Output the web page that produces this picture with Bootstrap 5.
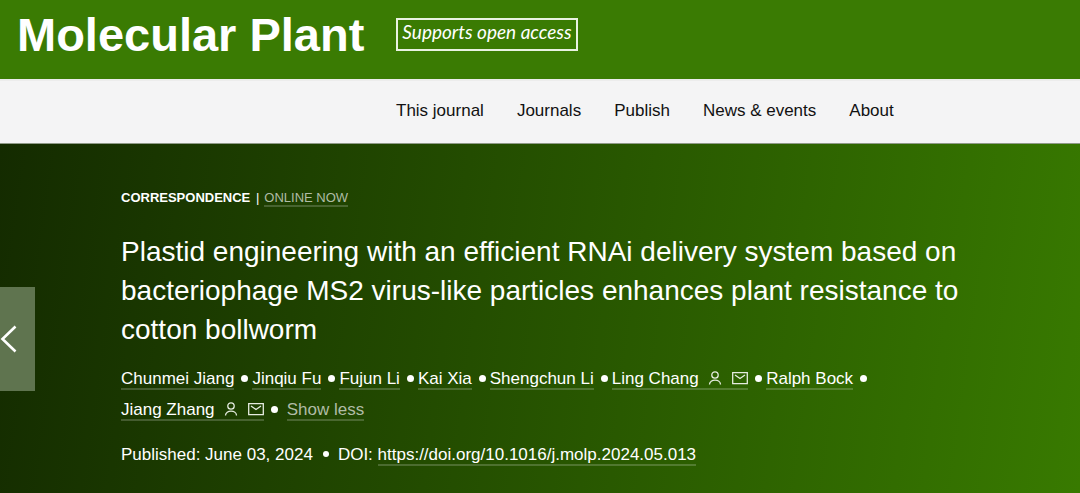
<!DOCTYPE html>
<html lang="en">
<head>
<meta charset="utf-8">
<meta name="viewport" content="width=device-width, initial-scale=1">
<title>Molecular Plant</title>
<link href="https://cdn.jsdelivr.net/npm/bootstrap@5.3.0/dist/css/bootstrap.min.css" rel="stylesheet">
<style>
body { font-family: "Liberation Sans", Arial, sans-serif; font-size: 17px; line-height: 31px; background: #387a00; }
a { color: inherit; text-decoration: none; }
.masthead { background: #3a7b03; min-height: 79px; padding: 8px 17px; gap: 32px; }
.brand-name { font-size: 47px; line-height: 54px; font-weight: 700; }
.access-tag { font-family: Lato, sans-serif; font-style: italic; font-size: 19px; line-height: 23px; border: 2px solid #e9f2e2; padding: 0 4px 6px 4px; margin-top: 10px; }
.site-menu { background: #f4f4f5; min-height: 65px; border-top: 2px solid #ececec; border-bottom: 1px solid #8f9a88; gap: 33px; padding: 0 16px 4px 396px; }
.site-menu a { color: #111; }
.article-hero { background: linear-gradient(98deg, #142b00, #387a00); min-height: calc(100vh - 144px); padding: 43px 112px 20px 121px; }
.article-kind { font-size: 13px; line-height: 21px; }
.article-kind .underlined { line-height: 15px; }
.kind-divider { margin: 0 5px 0 2px; }
.article-title { font-size: 28px; line-height: 39px; font-weight: 400; margin: 24px 0 14px; }
.underlined { display: inline-block; line-height: 19px; border-bottom: 2px solid #ffffff30; }
.muted-link { color: #b0bca6; }
.dot { display: inline-block; width: 7px; height: 7px; border-radius: 50%; background: #fff; vertical-align: 2px; margin: 0 4px 0 7px; }
.dot-small { width: 6px; height: 6px; vertical-align: 3px; margin: 0 9px 0 10px; }
.glyph { fill: none; stroke: #e6ece0; stroke-width: 1.3; vertical-align: -1px; margin-left: 5px; }
.published { margin-top: 14px; }
.prev-tab { position: absolute; left: 0; top: 143px; width: 35px; height: 104px; background: #5f744f; border: 0; padding: 0; }
</style>
</head>
<body>
<header class="masthead d-flex align-items-start text-white">
  <a href="#" class="brand-name">Molecular Plant</a>
  <a href="#" class="access-tag">Supports open access</a>
</header>
<nav class="site-menu d-flex align-items-center" aria-label="Main">
  <a href="#">This journal</a>
  <a href="#">Journals</a>
  <a href="#">Publish</a>
  <a href="#">News &amp; events</a>
  <a href="#">About</a>
</nav>
<main class="article-hero position-relative text-white">
  <button class="prev-tab d-flex align-items-center" type="button" aria-label="Previous article">
    <svg width="18" height="28" viewBox="0 0 18 28" fill="none" stroke="#fff" stroke-width="2.6"><path d="M15.500 1.500 2.500 14l13 12.500"/></svg>
  </button>
  <div class="article-kind"><strong>CORRESPONDENCE</strong> <span class="kind-divider">|</span><a href="#" class="underlined muted-link">ONLINE NOW</a></div>
  <h1 class="article-title">Plastid engineering with an efficient RNAi delivery system based on bacteriophage MS2 virus-like particles enhances plant resistance to cotton bollworm</h1>
  <div class="authors">
    <a href="#" class="underlined">Chunmei Jiang</a><span class="dot"></span><a href="#" class="underlined">Jinqiu Fu</a><span class="dot"></span><a href="#" class="underlined">Fujun Li</a><span class="dot"></span><a href="#" class="underlined">Kai Xia</a><span class="dot"></span><a href="#" class="underlined">Shengchun Li</a><span class="dot"></span><a href="#" class="underlined">Ling Chang
      <svg class="glyph" width="14" height="14" viewBox="0 0 14 14"><circle cx="7" cy="4" r="3.200"/><path d="M1.500 13.500C1.500 7.600 12.500 7.600 12.500 13.500"/></svg>
      <svg class="glyph" width="16" height="13" viewBox="0 0 16 13"><path d="M.7.700h14.600v11H.7zM3 3l5 3.500L13 3"/></svg></a><span class="dot"></span><a href="#" class="underlined">Ralph Bock</a><span class="dot"></span><br>
    <a href="#" class="underlined">Jiang Zhang
      <svg class="glyph" width="14" height="14" viewBox="0 0 14 14"><circle cx="7" cy="4" r="3.200"/><path d="M1.500 13.500C1.500 7.600 12.500 7.600 12.500 13.500"/></svg>
      <svg class="glyph" width="16" height="13" viewBox="0 0 16 13"><path d="M.7.700h14.600v11H.7zM3 3l5 3.500L13 3"/></svg></a><span class="dot"></span>
    <a href="#" class="underlined muted-link">Show less</a>
  </div>
  <div class="published">Published: June 03, 2024<span class="dot dot-small"></span>DOI: <a href="#" class="underlined">https://doi.org/10.1016/j.molp.2024.05.013</a></div>
</main>
<script src="https://cdn.jsdelivr.net/npm/bootstrap@5.3.0/dist/js/bootstrap.bundle.min.js"></script>
</body>
</html>
